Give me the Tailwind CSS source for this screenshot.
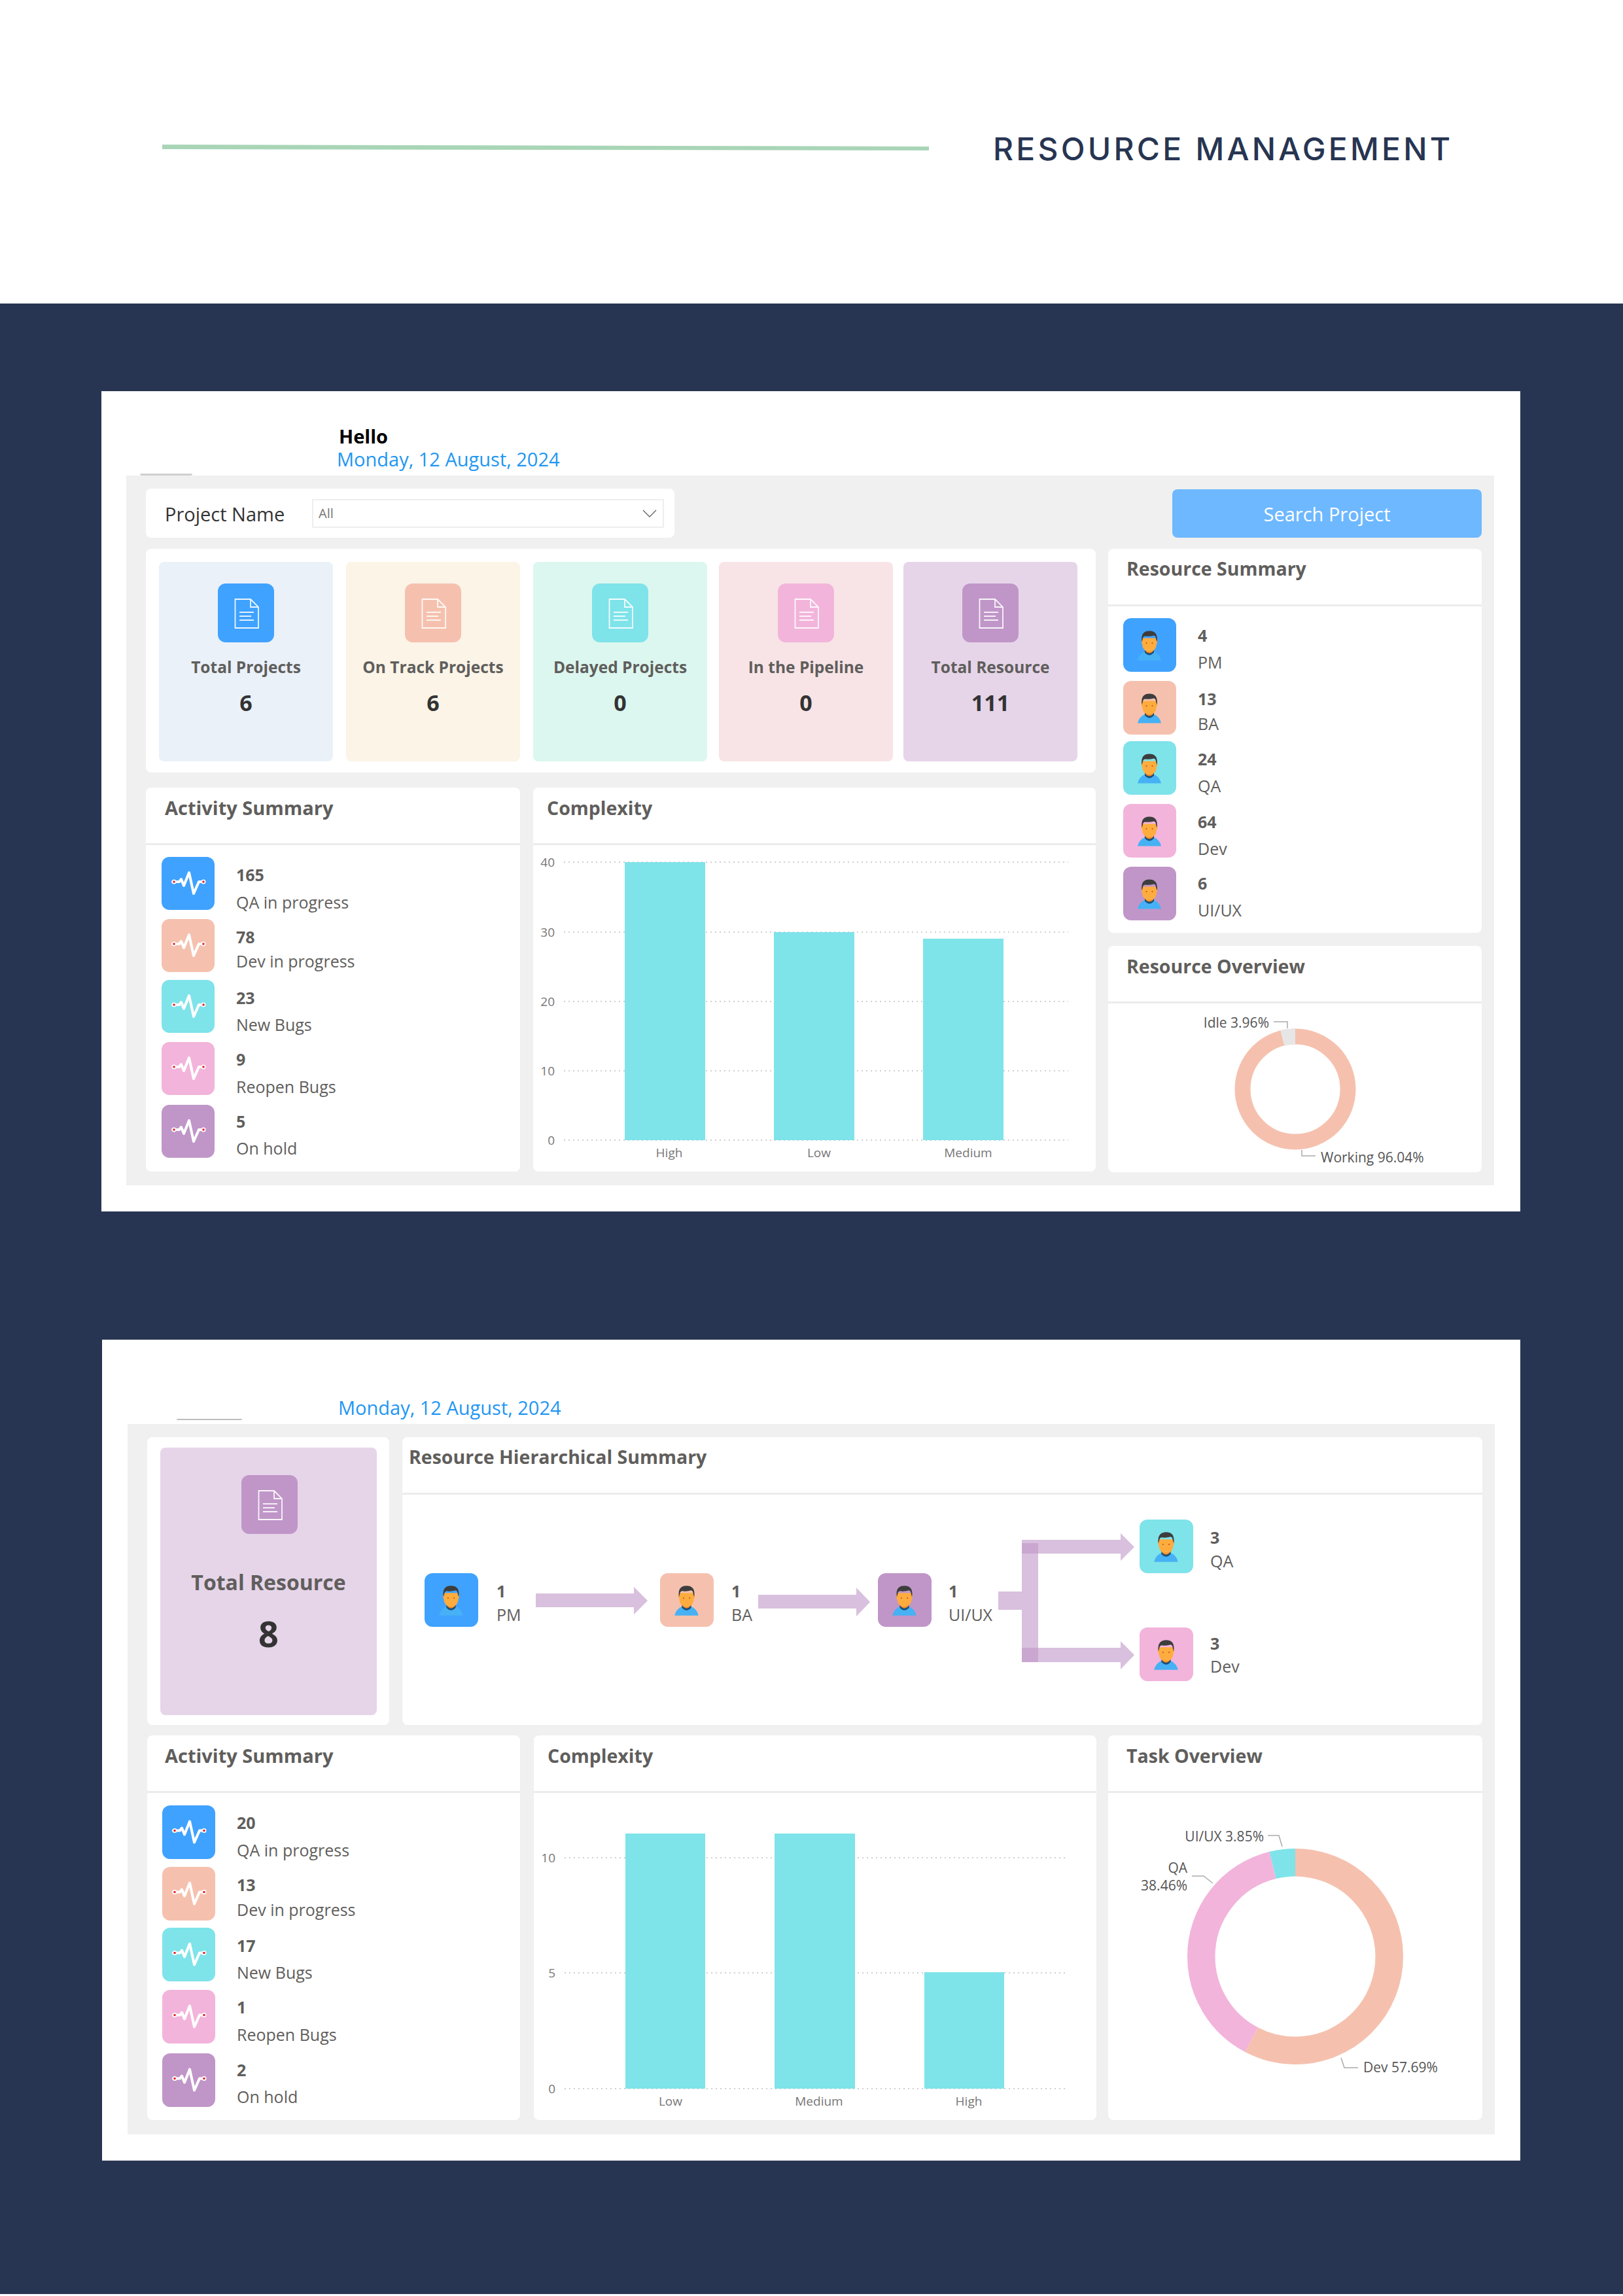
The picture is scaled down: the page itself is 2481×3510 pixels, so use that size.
<!DOCTYPE html>
<html lang="en">
<head>
    <meta charset="UTF-8">
    <title>Resource Management</title>
    <script src="https://cdn.jsdelivr.net/npm/@tailwindcss/browser@4"></script>
</head>
<body class="w-[2481px] h-[3510px] overflow-hidden bg-white font-['Open_Sans',sans-serif] text-[#605e5c]">
    <svg class="hidden">
        <symbol id="avatar" viewBox="0 0 81 81">
            <path d="M22 64 Q24 54 34 50 L46 50 Q56 54 58 64 Z" fill="#46b1f4"/>
            <path d="M33 48 L47 48 L47 52 Q40 60 33 52 Z" fill="#1d4f78"/>
            <path d="M34 44 H46 V50 Q40 56 34 50 Z" fill="#f5871f"/>
            <path d="M28 36 Q27 34 29 31 V38 Q29 46 34 49 Q40 53 46 49 Q51 46 51 38 V31 Q53 34 52 36 Q52 38 51 39 L51 30 H29 L29 39 Q28 38 28 36 Z" fill="#ffac3f"/>
            <path d="M28.5 36 Q26 19 40 19 Q54 19 51.5 36 L50 31 Q50 27 47 26 Q40 28 33 27 Q30 28 30 31 Z" fill="#3d3d3d"/>
            <circle cx="35.5" cy="37.5" r="1" fill="#a8541a"/>
            <circle cx="44.5" cy="37.5" r="1" fill="#a8541a"/>
        </symbol>
        <symbol id="pulse" viewBox="0 0 81 81">
            <path d="M17 38 H27 L30 34 L34 44 L42 24 L49 56 L57 38 H65" fill="none" stroke="#fff" stroke-width="4" stroke-linejoin="round" stroke-linecap="round"/>
            <circle cx="19" cy="38" r="3.5" fill="#fff"/>
            <circle cx="64" cy="38" r="3.5" fill="#fff"/>
            <circle cx="19" cy="38" r="1.8" fill="#e8212b"/>
            <circle cx="64" cy="38" r="1.8" fill="#e8212b"/>
        </symbol>
        <symbol id="doc" viewBox="0 0 86 90">
            <path d="M26.5 24 H50 L62 36 V68 H26.5 Z M50 24 V36 H62" fill="none" stroke="#fff" stroke-width="1.8" stroke-opacity="0.9"/>
            <path d="M33 44 H55 M33 50 H51 M33 56 H55" fill="none" stroke="#fff" stroke-width="2" stroke-opacity="0.85"/>
        </symbol>
    </svg>

    <header class="h-[464px] pl-[248px] pt-[202px] pb-[210px] flex items-center">
        <svg class="w-[1172px] h-[10px] mb-[4px]" viewBox="0 0 1172 10"><polygon points="0,0 1172,3 1172,9 0,7" fill="#a9d5b7"/></svg>
        <h1 class="ml-[98px] text-[48px] leading-[52px] font-['Inter',sans-serif] font-medium tracking-[0.088em] text-[#273552] whitespace-nowrap">RESOURCE MANAGEMENT</h1>
    </header>

    <main class="h-[3043px] bg-[#283552] pt-[134px]">
        <!-- first dashboard -->
        <section class="ml-[155px] w-[2169px] h-[1254px] bg-white">
            <div class="h-[129px] pl-[360px] pt-[51px]">
                <p class="pl-[3px] text-[29px] leading-[36px] font-bold text-black">Hello</p>
                <p class="text-[29px] leading-[34px] text-[#2196f3]">Monday, 12 August, 2024</p>
            </div>
            <div class="relative ml-[38px] w-[2091px] h-[1085px] bg-[#f0f0f0] pt-[20px] pl-[30px] pr-[19px]">
                <div class="absolute left-[21px] top-[-3px] w-[80px] h-[3px] rounded-b-full bg-[#cfcfcf]"></div>
                <div class="flex justify-between h-[75px]">
                    <div class="w-[808px] bg-white rounded-[8px] flex items-center pl-[29px]">
                        <span class="w-[225px] pt-[2px] text-[29px] text-[#333]">Project Name</span>
                        <div class="w-[538px] h-[44px] border-2 border-[#eeeeee] flex items-center justify-between pl-[8px] pr-[8px]">
                            <span class="text-[20px] text-[#777]">All</span>
                            <svg class="w-[24px] h-[14px]" viewBox="0 0 24 14"><path d="M2 2 L12 12 L22 2" fill="none" stroke="#666" stroke-width="1.4"/></svg>
                        </div>
                    </div>
                    <button class="w-[473px] mt-[1px] pt-[2px] bg-[#6eb8ff] rounded-[8px] text-[29px] text-white">Search Project</button>
                </div>
                <div class="flex mt-[17px] gap-[19px]">
                    <div class="w-[1452px]">
                        <div class="h-[342px] bg-white rounded-[8px] pl-[20px] pt-[20px] flex gap-[20px]">
                            <div class="w-[266px] h-[305px] rounded-[8px] bg-[#eaf1f9] flex flex-col items-center pt-[33px]">
                                <svg class="w-[86px] h-[90px] rounded-[12px] bg-[#3fa2ff]"><use href="#doc"/></svg>
                                <p class="mt-[23px] text-[24.5px] leading-[30px] font-bold whitespace-nowrap">Total Projects</p>
                                <p class="mt-[19px] text-[34px] leading-[40px] font-bold text-[#333]">6</p>
                            </div>
                            <div class="w-[266px] h-[305px] rounded-[8px] bg-[#fbf4e7] flex flex-col items-center pt-[33px]">
                                <svg class="w-[86px] h-[90px] rounded-[12px] bg-[#f5c1ae]"><use href="#doc"/></svg>
                                <p class="mt-[23px] text-[24.5px] leading-[30px] font-bold whitespace-nowrap">On Track Projects</p>
                                <p class="mt-[19px] text-[34px] leading-[40px] font-bold text-[#333]">6</p>
                            </div>
                            <div class="w-[266px] h-[305px] rounded-[8px] bg-[#dcf7ef] flex flex-col items-center pt-[33px]">
                                <svg class="w-[86px] h-[90px] rounded-[12px] bg-[#7fe3ea]"><use href="#doc"/></svg>
                                <p class="mt-[23px] text-[24.5px] leading-[30px] font-bold whitespace-nowrap">Delayed Projects</p>
                                <p class="mt-[19px] text-[34px] leading-[40px] font-bold text-[#333]">0</p>
                            </div>
                            <div class="w-[266px] h-[305px] ml-[-2px] rounded-[8px] bg-[#f8e4e6] flex flex-col items-center pt-[33px]">
                                <svg class="w-[86px] h-[90px] rounded-[12px] bg-[#f2b4db]"><use href="#doc"/></svg>
                                <p class="mt-[23px] text-[24.5px] leading-[30px] font-bold whitespace-nowrap">In the Pipeline</p>
                                <p class="mt-[19px] text-[34px] leading-[40px] font-bold text-[#333]">0</p>
                            </div>
                            <div class="w-[266px] h-[305px] ml-[-4px] rounded-[8px] bg-[#e6d5e9] flex flex-col items-center pt-[33px]">
                                <svg class="w-[86px] h-[90px] rounded-[12px] bg-[#c096c8]"><use href="#doc"/></svg>
                                <p class="mt-[23px] text-[24.5px] leading-[30px] font-bold whitespace-nowrap">Total Resource</p>
                                <p class="mt-[19px] text-[34px] leading-[40px] font-bold text-[#333]">111</p>
                            </div>
                        </div>
                        <div class="flex gap-[20px] mt-[23px]">
                            <div class="w-[572px] h-[587px] bg-white rounded-[8px]">
                                <h2 class="h-[88px] border-b-[3px] border-[#ececec] pl-[29px] pt-[11px] text-[29px] leading-[40px] font-bold">Activity Summary</h2>
                                <div class="pl-[24px] pt-[18px]">
                                    <div class="flex gap-[33px] h-[81px]">
                                        <svg class="w-[81px] h-[81px] rounded-[12px] bg-[#3fa2ff]"><use href="#pulse"/></svg>
                                        <div class="pt-[12px]"><p class="text-[25px] leading-[30px] font-bold">165</p><p class="mt-[12px] text-[25px] leading-[30px]">QA in progress</p></div>
                                    </div>
                                    <div class="flex gap-[33px] h-[81px] mt-[14px]">
                                        <svg class="w-[81px] h-[81px] rounded-[12px] bg-[#f5c1ae]"><use href="#pulse"/></svg>
                                        <div class="pt-[12px]"><p class="text-[25px] leading-[30px] font-bold">78</p><p class="mt-[7px] text-[25px] leading-[30px]">Dev in progress</p></div>
                                    </div>
                                    <div class="flex gap-[33px] h-[81px] mt-[12px]">
                                        <svg class="w-[81px] h-[81px] rounded-[12px] bg-[#7fe3ea]"><use href="#pulse"/></svg>
                                        <div class="pt-[12px]"><p class="text-[25px] leading-[30px] font-bold">23</p><p class="mt-[11px] text-[25px] leading-[30px]">New Bugs</p></div>
                                    </div>
                                    <div class="flex gap-[33px] h-[81px] mt-[14px]">
                                        <svg class="w-[81px] h-[81px] rounded-[12px] bg-[#f2b4db]"><use href="#pulse"/></svg>
                                        <div class="pt-[11px]"><p class="text-[25px] leading-[30px] font-bold">9</p><p class="mt-[12px] text-[25px] leading-[30px]">Reopen Bugs</p></div>
                                    </div>
                                    <div class="flex gap-[33px] h-[81px] mt-[15px]">
                                        <svg class="w-[81px] h-[81px] rounded-[12px] bg-[#c096c8]"><use href="#pulse"/></svg>
                                        <div class="pt-[10px]"><p class="text-[25px] leading-[30px] font-bold">5</p><p class="mt-[11px] text-[25px] leading-[30px]">On hold</p></div>
                                    </div>
                                </div>
                            </div>
                            <div class="w-[860px] h-[587px] bg-white rounded-[8px]">
                                <h2 class="h-[88px] border-b-[3px] border-[#ececec] pl-[21px] pt-[11px] text-[28.5px] leading-[40px] font-bold">Complexity</h2>
                                <svg class="w-[860px] h-[499px] text-[19px] fill-[#777]" viewBox="0 0 860 499">
                                    <g stroke="#cfcfcf" stroke-width="2" stroke-dasharray="2 5">
                                        <path d="M47 26 H818 M47 133 H818 M47 239 H818 M47 345 H818 M47 451 H818"/>
                                    </g>
                                    <rect x="140" y="26" width="123" height="425" fill="#7fe3ea"/>
                                    <rect x="368" y="133" width="123" height="318" fill="#7fe3ea"/>
                                    <rect x="596" y="143" width="123" height="308" fill="#7fe3ea"/>
                                    <g text-anchor="end">
                                        <text x="33" y="33">40</text><text x="33" y="140">30</text><text x="33" y="246">20</text><text x="33" y="352">10</text><text x="33" y="458">0</text>
                                    </g>
                                    <g text-anchor="middle">
                                        <text x="208" y="477">High</text><text x="437" y="477">Low</text><text x="665" y="477">Medium</text>
                                    </g>
                                </svg>
                            </div>
                        </div>
                    </div>
                    <div class="w-[571px]">
                        <div class="h-[587px] bg-white rounded-[8px]">
                            <h2 class="h-[88px] border-b-[3px] border-[#ececec] pl-[28px] pt-[10px] text-[28.5px] leading-[40px] font-bold">Resource Summary</h2>
                            <div class="pl-[23px] pt-[18px]">
                                <div class="flex gap-[33px] h-[82px]">
                                    <svg class="w-[81px] h-[82px] rounded-[12px] bg-[#3fa2ff]"><use href="#avatar"/></svg>
                                    <div class="pt-[11px]"><p class="text-[25px] leading-[30px] font-bold">4</p><p class="mt-[11px] text-[25px] leading-[30px]">PM</p></div>
                                </div>
                                <div class="flex gap-[33px] h-[82px] mt-[14px]">
                                    <svg class="w-[81px] h-[82px] rounded-[12px] bg-[#f5c1ae]"><use href="#avatar"/></svg>
                                    <div class="pt-[12px]"><p class="text-[25px] leading-[30px] font-bold">13</p><p class="mt-[8px] text-[25px] leading-[30px]">BA</p></div>
                                </div>
                                <div class="flex gap-[33px] h-[82px] mt-[10px]">
                                    <svg class="w-[81px] h-[82px] rounded-[12px] bg-[#7fe3ea]"><use href="#avatar"/></svg>
                                    <div class="pt-[12px]"><p class="text-[25px] leading-[30px] font-bold">24</p><p class="mt-[11px] text-[25px] leading-[30px]">QA</p></div>
                                </div>
                                <div class="flex gap-[33px] h-[82px] mt-[14px]">
                                    <svg class="w-[81px] h-[82px] rounded-[12px] bg-[#f2b4db]"><use href="#avatar"/></svg>
                                    <div class="pt-[12px]"><p class="text-[25px] leading-[30px] font-bold">64</p><p class="mt-[11px] text-[25px] leading-[30px]">Dev</p></div>
                                </div>
                                <div class="flex gap-[33px] h-[82px] mt-[14px]">
                                    <svg class="w-[81px] h-[82px] rounded-[12px] bg-[#c096c8]"><use href="#avatar"/></svg>
                                    <div class="pt-[10px]"><p class="text-[25px] leading-[30px] font-bold">6</p><p class="mt-[11px] text-[25px] leading-[30px]">UI/UX</p></div>
                                </div>
                            </div>
                        </div>
                        <div class="h-[346px] mt-[20px] bg-white rounded-[8px]">
                            <h2 class="h-[88px] border-b-[3px] border-[#ececec] pl-[28px] pt-[11px] text-[28.5px] leading-[40px] font-bold">Resource Overview</h2>
                            <svg class="w-[571px] h-[258px] text-[21px] fill-[#555]" viewBox="0 0 571 258">
                                <g fill="none" stroke-width="24">
                                    <circle cx="286" cy="131" r="80.5" stroke="#f5c1ae"/>
                                    <circle cx="286" cy="131" r="80.5" stroke="#e6e6e6" pathLength="100" stroke-dasharray="3.96 96.04" stroke-dashoffset="3.96" transform="rotate(-90 286 131)"/>
                                </g>
                                <path d="M253 28 H274 V38 M296 224 V233 H317" fill="none" stroke="#aaa" stroke-width="1.5"/>
                                <text x="246" y="37" text-anchor="end">Idle 3.96%</text>
                                <text x="325" y="243">Working 96.04%</text>
                            </svg>
                        </div>
                    </div>
                </div>
            </div>
        </section>

        <!-- second dashboard -->
        <section class="ml-[156px] mt-[196px] w-[2168px] h-[1255px] bg-white">
            <div class="h-[129px] pl-[361px] pt-[87px]">
                <p class="text-[29px] leading-[34px] text-[#2196f3]">Monday, 12 August, 2024</p>
            </div>
            <div class="relative ml-[39px] w-[2090px] h-[1086px] bg-[#f0f0f0] pt-[20px] pl-[30px]">
                <div class="absolute left-[75px] top-[-8px] w-[100px] h-[2px] rounded-b-full bg-[#bdbdbd]"></div>
                <div class="flex gap-[20px]">
                    <div class="w-[370px] h-[440px] bg-white rounded-[8px] pl-[20px] pt-[16px]">
                        <div class="w-[331px] h-[409px] rounded-[8px] bg-[#e6d5e9] flex flex-col items-center pt-[42px]">
                            <svg class="w-[86px] h-[90px] ml-[2px] rounded-[12px] bg-[#c096c8]"><use href="#doc"/></svg>
                            <p class="mt-[52px] text-[32px] leading-[44px] font-bold">Total Resource</p>
                            <p class="mt-[24px] text-[54px] leading-[64px] font-bold text-[#333]">8</p>
                        </div>
                    </div>
                    <div class="w-[1651px] h-[440px] bg-white rounded-[8px]">
                        <h2 class="h-[88px] border-b-[3px] border-[#ececec] pl-[10px] pt-[10px] text-[28.5px] leading-[40px] font-bold">Resource Hierarchical Summary</h2>
                        <div class="relative h-[352px]">
                            <svg class="absolute left-0 top-0 w-[1651px] h-[352px]" viewBox="0 0 1651 352">
                                <g fill="#c096c8" fill-opacity="0.6">
                                    <polygon points="204,151 354,151 354,141 375,162 354,183 354,172 204,172"/>
                                    <polygon points="544,153 694,153 694,142 715,164 694,186 694,174 544,174"/>
                                    <rect x="911" y="148" width="36" height="28"/>
                                    <rect x="947" y="74" width="25" height="182"/>
                                    <polygon points="947,69 1098,69 1098,59 1119,80 1098,101 1098,90 947,90"/>
                                    <polygon points="947,234 1098,234 1098,224 1119,245 1098,267 1098,256 947,256"/>
                                </g>
                            </svg>
                            <div class="absolute left-[34px] top-[120px] flex gap-[28px]">
                                <svg class="w-[82px] h-[82px] rounded-[12px] bg-[#3fa2ff]"><use href="#avatar"/></svg>
                                <div class="pt-[12px]"><p class="text-[25px] leading-[30px] font-bold">1</p><p class="mt-[6px] text-[25px] leading-[30px]">PM</p></div>
                            </div>
                            <div class="absolute left-[394px] top-[120px] flex gap-[27px]">
                                <svg class="w-[82px] h-[82px] rounded-[12px] bg-[#f5c1ae]"><use href="#avatar"/></svg>
                                <div class="pt-[12px]"><p class="text-[25px] leading-[30px] font-bold">1</p><p class="mt-[6px] text-[25px] leading-[30px]">BA</p></div>
                            </div>
                            <div class="absolute left-[727px] top-[120px] flex gap-[26px]">
                                <svg class="w-[82px] h-[82px] rounded-[12px] bg-[#c096c8]"><use href="#avatar"/></svg>
                                <div class="pt-[12px]"><p class="text-[25px] leading-[30px] font-bold">1</p><p class="mt-[6px] text-[25px] leading-[30px]">UI/UX</p></div>
                            </div>
                            <div class="absolute left-[1127px] top-[38px] flex gap-[26px]">
                                <svg class="w-[82px] h-[82px] rounded-[12px] bg-[#7fe3ea]"><use href="#avatar"/></svg>
                                <div class="pt-[12px]"><p class="text-[25px] leading-[30px] font-bold">3</p><p class="mt-[6px] text-[25px] leading-[30px]">QA</p></div>
                            </div>
                            <div class="absolute left-[1127px] top-[203px] flex gap-[26px]">
                                <svg class="w-[82px] h-[82px] rounded-[12px] bg-[#f2b4db]"><use href="#avatar"/></svg>
                                <div class="pt-[9px]"><p class="text-[25px] leading-[30px] font-bold">3</p><p class="mt-[5px] text-[25px] leading-[30px]">Dev</p></div>
                            </div>
                        </div>
                    </div>
                </div>
                <div class="flex mt-[16px]">
                    <div class="w-[570px] h-[588px] bg-white rounded-[8px]">
                        <h2 class="h-[88px] border-b-[3px] border-[#ececec] pl-[27px] pt-[11px] text-[29px] leading-[40px] font-bold">Activity Summary</h2>
                        <div class="pl-[23px] pt-[19px]">
                            <div class="flex gap-[33px] h-[82px]">
                                <svg class="w-[81px] h-[82px] rounded-[12px] bg-[#3fa2ff]"><use href="#pulse"/></svg>
                                <div class="pt-[11px]"><p class="text-[25px] leading-[30px] font-bold">20</p><p class="mt-[12px] text-[25px] leading-[30px]">QA in progress</p></div>
                            </div>
                            <div class="flex gap-[33px] h-[82px] mt-[12px]">
                                <svg class="w-[81px] h-[82px] rounded-[12px] bg-[#f5c1ae]"><use href="#pulse"/></svg>
                                <div class="pt-[12px]"><p class="text-[25px] leading-[30px] font-bold">13</p><p class="mt-[8px] text-[25px] leading-[30px]">Dev in progress</p></div>
                            </div>
                            <div class="flex gap-[33px] h-[82px] mt-[11px]">
                                <svg class="w-[81px] h-[82px] rounded-[12px] bg-[#7fe3ea]"><use href="#pulse"/></svg>
                                <div class="pt-[12px]"><p class="text-[25px] leading-[30px] font-bold">17</p><p class="mt-[11px] text-[25px] leading-[30px]">New Bugs</p></div>
                            </div>
                            <div class="flex gap-[33px] h-[82px] mt-[13px]">
                                <svg class="w-[81px] h-[82px] rounded-[12px] bg-[#f2b4db]"><use href="#pulse"/></svg>
                                <div class="pt-[11px]"><p class="text-[25px] leading-[30px] font-bold">1</p><p class="mt-[12px] text-[25px] leading-[30px]">Reopen Bugs</p></div>
                            </div>
                            <div class="flex gap-[33px] h-[82px] mt-[15px]">
                                <svg class="w-[81px] h-[82px] rounded-[12px] bg-[#c096c8]"><use href="#pulse"/></svg>
                                <div class="pt-[10px]"><p class="text-[25px] leading-[30px] font-bold">2</p><p class="mt-[11px] text-[25px] leading-[30px]">On hold</p></div>
                            </div>
                        </div>
                    </div>
                    <div class="w-[860px] h-[588px] ml-[21px] bg-white rounded-[8px]">
                        <h2 class="h-[88px] border-b-[3px] border-[#ececec] pl-[21px] pt-[11px] text-[28.5px] leading-[40px] font-bold">Complexity</h2>
                        <svg class="w-[860px] h-[500px] text-[19px] fill-[#777]" viewBox="0 0 860 500">
                            <g stroke="#cfcfcf" stroke-width="2" stroke-dasharray="2 5">
                                <path d="M47 99 H817 M47 275 H817 M47 452 H817"/>
                            </g>
                            <rect x="140" y="62" width="122" height="390" fill="#7fe3ea"/>
                            <rect x="368" y="62" width="123" height="390" fill="#7fe3ea"/>
                            <rect x="597" y="274" width="122" height="178" fill="#7fe3ea"/>
                            <g text-anchor="end">
                                <text x="33" y="106">10</text><text x="33" y="282">5</text><text x="33" y="459">0</text>
                            </g>
                            <g text-anchor="middle">
                                <text x="209" y="478">Low</text><text x="436" y="478">Medium</text><text x="665" y="478">High</text>
                            </g>
                        </svg>
                    </div>
                    <div class="w-[572px] h-[588px] ml-[18px] bg-white rounded-[8px]">
                        <h2 class="h-[88px] border-b-[3px] border-[#ececec] pl-[28px] pt-[11px] text-[28.5px] leading-[40px] font-bold">Task Overview</h2>
                        <svg class="w-[572px] h-[500px] text-[21px] fill-[#555]" viewBox="0 0 572 500">
                            <g fill="none" stroke-width="42.5" transform="rotate(-90 286 250)">
                                <circle cx="286" cy="250" r="143.75" stroke="#f5c1ae" pathLength="100" stroke-dasharray="57.69 42.31"/>
                                <circle cx="286" cy="250" r="143.75" stroke="#f2b4db" pathLength="100" stroke-dasharray="38.46 61.54" stroke-dashoffset="-57.69"/>
                                <circle cx="286" cy="250" r="143.75" stroke="#7fe3ea" pathLength="100" stroke-dasharray="3.85 96.15" stroke-dashoffset="-96.15"/>
                            </g>
                            <path d="M244 65 H261 L266 82 M128 127 H146 L160 138 M356 405 L361 420 H382" fill="none" stroke="#aaa" stroke-width="1.5"/>
                            <text x="238" y="74" text-anchor="end">UI/UX 3.85%</text>
                            <text x="121" y="122" text-anchor="end">QA</text>
                            <text x="121" y="149" text-anchor="end">38.46%</text>
                            <text x="390" y="427">Dev 57.69%</text>
                        </svg>
                    </div>
                </div>
            </div>
        </section>
    </main>
</body>
</html>
